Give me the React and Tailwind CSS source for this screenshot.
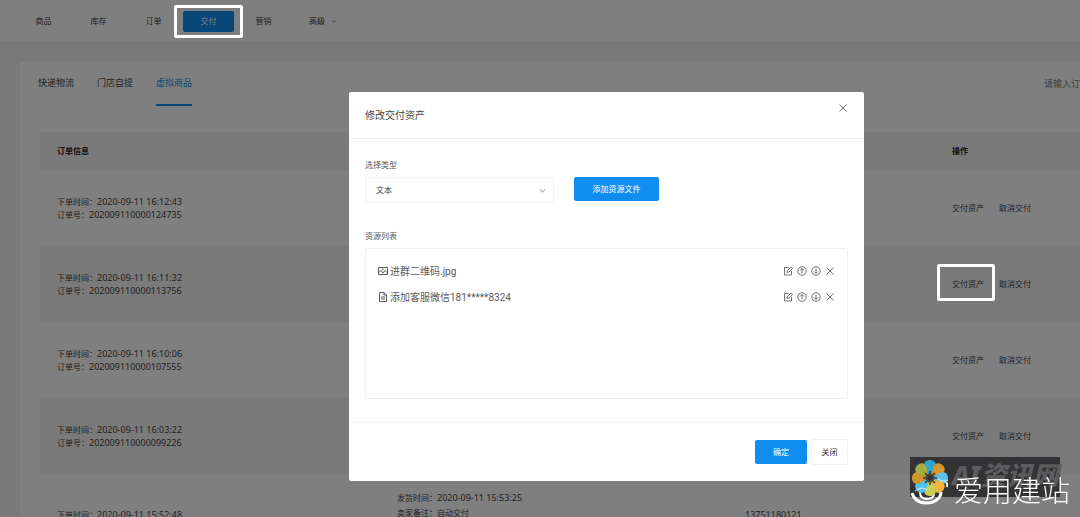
import React from 'react'

const navItems = ['商品', '库存', '订单', '交付', '营销']
const tabs = ['快递物流', '门店自提', '虚拟商品']

const orders = [
  { time: '2020-09-11 16:12:43', no: '202009110000124735' },
  { time: '2020-09-11 16:11:32', no: '202009110000113756', marked: true },
  { time: '2020-09-11 16:10:06', no: '202009110000107555' },
  { time: '2020-09-11 16:03:22', no: '202009110000099226' },
]

const resources = [
  { type: 'image', name: '进群二维码.jpg' },
  { type: 'text', name: '添加客服微信181*****8324' },
]

const Icon = ({ className = 'size-[10px]', children }) => (
  <svg viewBox="0 0 20 20" fill="none" stroke="currentColor" strokeWidth="1.7" className={`shrink-0 ${className}`} aria-hidden="true">
    {children}
  </svg>
)

const CloseIcon = () => (
  <Icon><path d="M3 3l14 14M17 3L3 17" /></Icon>
)

const ChevronIcon = ({ className }) => (
  <Icon className={className}><path d="M2 7l8 7 8-7" strokeWidth="2" /></Icon>
)

const FileIcon = ({ type }) => type === 'image' ? (
  <Icon>
    <path d="M1 3h18v14H1zM2 13l4-4 4 5 4-5 5 5" strokeWidth="2" />
    <circle cx="9.5" cy="6.5" r="1" />
  </Icon>
) : (
  <Icon>
    <path d="M3 1h9l5 5v13H3zM12 1v5h5M6 10h8M6 14h8" strokeWidth="2" />
  </Icon>
)

const Marker = ({ className }) => (
  <span className={`pointer-events-none absolute z-20 rounded-xs border-3 border-white ${className}`} />
)

const OrderLine = ({ label, value }) => (
  <div className="flex items-center">
    <span>{label}：</span>
    <span className="text-[9px]">{value}</span>
  </div>
)

const Header = () => (
  <header className="flex h-[42px] items-center bg-white pl-4 shadow-xs">
    <nav className="flex items-center">
      {navItems.map((item) => (
        <div key={item} className="relative flex w-[55px] justify-center">
          {item === '交付' ? (
            <>
              <button className="h-[21px] w-[51px] rounded-xs bg-[#108ef0] text-white">{item}</button>
              <Marker className="-inset-x-[7px] -inset-y-[6px]" />
            </>
          ) : (
            <button className="h-[21px]">{item}</button>
          )}
        </div>
      ))}
      <button className="ml-[18px] flex items-center gap-[6px]">
        高级
        <ChevronIcon className="size-[6px]" />
      </button>
    </nav>
  </header>
)

const OrderTable = () => (
  <table className="w-full table-fixed border-collapse text-left">
    <colgroup>
      <col className="w-[340px]" />
      <col className="w-[348px]" />
      <col className="w-[207px]" />
      <col />
    </colgroup>
    <thead>
      <tr className="h-[38px] bg-[#f5f5f7] text-[#222]">
        <th className="pl-[17px]">订单信息</th>
        <th />
        <th />
        <th className="pl-[17px]">操作</th>
      </tr>
    </thead>
    <tbody>
      {orders.map((order) => (
        <tr key={order.no} className="h-[76px] even:bg-[#f4f4f6]">
          <td className="pl-[17px] leading-[13px]">
            <OrderLine label="下单时间" value={order.time} />
            <OrderLine label="订单号" value={order.no} />
          </td>
          <td />
          <td />
          <td className="pl-[17px]">
            <div className="flex gap-[15px] whitespace-nowrap">
              <span className="relative">
                <button>交付资产</button>
                {order.marked && <Marker className="-top-[14px] -right-[11px] -bottom-[11px] -left-[15px]" />}
              </span>
              <button>取消交付</button>
            </div>
          </td>
        </tr>
      ))}
      <tr className="h-[92px] align-top">
        <td className="pt-[34px] pl-[17px] leading-[13px]">
          <OrderLine label="下单时间" value="2020-09-11 15:52:48" />
        </td>
        <td className="pt-4 pl-[17px] leading-[15px]">
          <OrderLine label="发货时间" value="2020-09-11 15:53:25" />
          <div>卖家备注：自动交付</div>
        </td>
        <td className="pt-[34px] pl-[17px] text-[9px] leading-[13px]">13751180121</td>
        <td />
      </tr>
    </tbody>
  </table>
)

const ResourceRow = ({ type, name }) => (
  <li className="flex h-[26px] items-center justify-between">
    <div className="flex items-center gap-[2px] font-[Roboto,'Noto_Sans_CJK_SC',sans-serif] text-[10px]">
      <FileIcon type={type} />
      {name}
    </div>
    <div className="flex items-center gap-1">
      <button aria-label="编辑">
        <Icon>
          <path d="M11 3H3v15h14v-8M8 13l1-4 7-7 3 3-7 7z" />
        </Icon>
      </button>
      <button aria-label="上移">
        <Icon>
          <circle cx="10" cy="10" r="8.5" />
          <path d="M10 15V5M6 9l4-4 4 4" />
        </Icon>
      </button>
      <button aria-label="下移">
        <Icon>
          <circle cx="10" cy="10" r="8.5" />
          <path d="M10 5v10M6 11l4 4 4-4" />
        </Icon>
      </button>
      <button aria-label="删除"><CloseIcon /></button>
    </div>
  </li>
)

const AssetDialog = () => (
  <div role="dialog" aria-labelledby="dialog-title" className="w-[515px] rounded-xs bg-white text-[#5a5a5a]">
    <div className="flex h-[47px] justify-between border-b border-[#eee] px-4">
      <h2 id="dialog-title" className="self-center text-[10px] text-[#444]">修改交付资产</h2>
      <button aria-label="关闭窗口" className="mt-[11px] h-[10px]"><CloseIcon /></button>
    </div>

    <div className="h-[283px] px-4 pt-5">
      <label htmlFor="asset-type" className="block leading-3">选择类型</label>
      <div className="mt-[6px] flex gap-5">
        <div className="relative w-[189px]">
          <select id="asset-type" className="h-[26px] w-full appearance-none rounded-xs border border-[#f2f2f2] bg-white pl-[10px] text-[#444]">
            <option>文本</option>
          </select>
          <ChevronIcon className="pointer-events-none absolute top-[10px] right-2 size-[7px]" />
        </div>
        <button className="h-6 w-[85px] rounded-xs bg-[#108ef0] text-white">添加资源文件</button>
      </div>

      <h3 className="mt-[27px] leading-3">资源列表</h3>
      <ul className="mt-[6px] h-[151px] rounded-xs border border-[#f0f0f0] px-3 pt-[9px]">
        {resources.map((item) => <ResourceRow key={item.name} {...item} />)}
      </ul>
    </div>

    <div className="flex h-[59px] items-center justify-end gap-1 border-t border-[#f2f2f2] px-4">
      <button className="h-6 w-[52px] rounded-xs bg-[#108ef0] text-white">确定</button>
      <button className="h-[26px] w-[37px] rounded-xs border border-[#f0f0f0] text-[#333]">关闭</button>
    </div>
  </div>
)

const petals = [
  { angle: 0, color: '#2ea6cc' },
  { angle: 45, color: '#d6972c' },
  { angle: 90, color: '#5cc4ea' },
  { angle: 135, color: '#f2b33a' },
  { angle: 180, color: '#c9cf58' },
  { angle: 225, color: '#52c3ec' },
  { angle: 270, color: '#d09530' },
  { angle: 315, color: '#a5ad45' },
]

const Watermark = () => (
  <div className="pointer-events-none absolute right-[11px] bottom-[10px] z-20 h-[50px] w-[159px]">
    <div className="flex h-10 w-[150px] items-center bg-[#333335] pb-1 pl-[42px] text-[26px] font-black whitespace-nowrap text-[#5c5c5e] italic">
      AI资讯网
    </div>
    <svg viewBox="0 0 40 50" className="absolute top-0 left-0 h-[50px] w-10">
      <g fill="none" stroke="#fff">
        <path d="M2 36c2 7 8 10 14 10 9 0 15-5 15-11" strokeWidth="3" />
        <path d="M10 35c0 5 3 7 7 7s7-2 7-6" strokeWidth="2" />
        <path d="M33 24c3 0 5 2 4 6" strokeWidth="2" />
      </g>
      {petals.map(({ angle, color }) => (
        <path key={angle} d="M20 19l-4-6c-4-6-1-10 4-10s8 4 4 10z" fill={color} transform={`rotate(${angle} 20 21)`} />
      ))}
      <path d="M20 14v14M13 21h14M15 16l10 10M25 16L15 26" stroke="#333335" strokeWidth="1.5" />
      <path d="M5 34c4-3 9-4 12-1M28 22c4 3 7 3 10 1" stroke="#fff" strokeOpacity="0.6" strokeWidth="1.5" fill="none" />
    </svg>
    <div className="absolute top-4 left-[44px] text-[29px] leading-9 font-light whitespace-nowrap text-white">爱用建站</div>
  </div>
)

const App = () => (
  <div className="relative h-screen overflow-hidden bg-[#f2f2f2] font-['Noto_Sans','Noto_Sans_CJK_SC',sans-serif] text-[8px] text-[#444]">
    <Header />
    <main className="mt-5 ml-5 bg-white">
      <div className="flex h-[70px] items-start justify-between pl-[18px] text-[9px]">
        <div className="flex gap-[23px]">
          {tabs.map((tab) => (
            <button
              key={tab}
              className={`h-11 border-b-2 ${tab === '虚拟商品' ? 'border-[#108ef0] text-[#108ef0]' : 'border-transparent'}`}
            >
              {tab}
            </button>
          ))}
        </div>
        <input aria-label="搜索订单" placeholder="请输入订" className="h-[42px] w-9 placeholder:text-[#777]" />
      </div>
      <div className="pl-5">
        <OrderTable />
      </div>
    </main>

    <div className="fixed inset-0 z-10 flex items-start justify-center bg-black/50 pt-[92px] pl-[133px]">
      <AssetDialog />
    </div>
    <Watermark />
  </div>
)

export default App
